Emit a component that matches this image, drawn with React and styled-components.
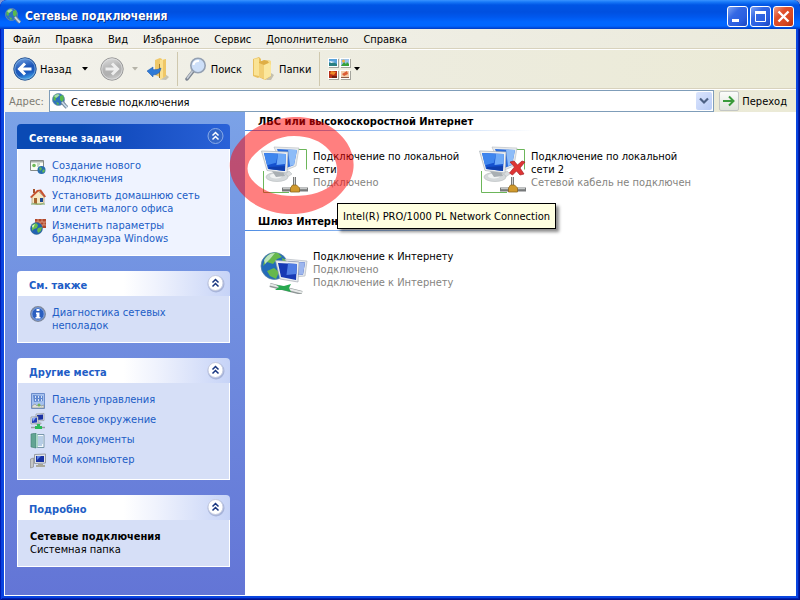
import React from "react";
import styled, { createGlobalStyle } from "styled-components";

const GlobalStyle = createGlobalStyle`
  * { box-sizing: border-box; }
  body { margin: 0; background: #7f97d4; }
  body, button, input {
    font-family: "DejaVu Sans Condensed", "Noto Sans", sans-serif;
    font-size: 11px;
    line-height: 13px;
    color: #000;
  }
  button { border: 0; padding: 0; margin: 0; background: none; }
  h1, h2, h3, p, ul { margin: 0; padding: 0; }
  ul { list-style: none; }
  svg { display: block; flex: none; }
`;

const Desktop = styled.div`
  min-height: 100vh;
  display: flex;
  flex-direction: column;
`;

const DesktopEdge = styled.div`
  height: 1px;
  background: linear-gradient(90deg, #4a70b8 100px, #000 100px, #000 101px, #fff 101px, #fff calc(100% - 62px), #4a70b8 calc(100% - 62px));
`;

const Window = styled.div`
  flex: 1;
  display: flex;
  flex-direction: column;
  background: #0a46e0;
  border-radius: 7px 7px 0 0;
  padding: 0 4px 4px;
  box-shadow: inset 1px 0 #001cb4, inset -1px -1px #00138c, inset 2px 0 #0840e0, inset -2px -2px #0020b0;
`;

const TitleBar = styled.header`
  height: 29px;
  margin: 0 -4px;
  padding: 3px 6px 0 5px;
  display: flex;
  align-items: center;
  gap: 4px;
  border-radius: 7px 7px 0 0;
  background: linear-gradient(#3a94ff 0, #1778f8 2px, #0055e5 5px, #0050e0 12px, #0058ee 17px, #0066ff 22px, #0066ff 26px, #0048d8 28px, #003cc0 29px);
`;

const Title = styled.h1`
  flex: 1;
  font-size: 12px;
  line-height: 16px;
  font-weight: bold;
  color: #fff;
  text-shadow: 1px 1px #0a2a80;
`;

const WindowButtons = styled.div`
  display: flex;
  gap: 2px;
`;

const WindowButton = styled.button`
  width: 21px;
  height: 21px;
  display: grid;
  place-items: center;
  border: 1px solid #fff;
  border-radius: 3px;
  background: ${(p) =>
    p.$close
      ? "linear-gradient(135deg, #f0a088, #e0502c 35%, #d84820 70%, #b83010)"
      : "linear-gradient(135deg, #7fa4f4, #3468e4 35%, #2a5ee0 70%, #1a44c0)"};
`;

const Client = styled.div`
  flex: 1;
  display: flex;
  flex-direction: column;
  background: #fff;
`;

const MenuBar = styled.nav`
  height: 20px;
  display: flex;
  align-items: center;
  gap: 15px;
  padding: 2px 0 0 9px;
  background: linear-gradient(90deg, #f4f3ee, #eeede2 60%, #ebeadb);
  border-bottom: 1px solid #d8d2bd;
`;

const MenuButton = styled.button`
  white-space: nowrap;
`;

const Toolbar = styled.div`
  height: 40px;
  display: flex;
  align-items: center;
  padding-left: 9px;
  background: linear-gradient(90deg, #f3f2ec, #edecdf 50%, #ebead6);
  border-top: 1px solid #fff;
  border-bottom: 1px solid #d8d2bd;
`;

const ToolButton = styled.button`
  display: flex;
  align-items: center;
  gap: 3px;
  margin-right: ${(p) => p.$after || 0}px;
`;

const Divider = styled.span`
  width: 1px;
  height: 34px;
  background: #cfc8ae;
  margin-right: ${(p) => p.$after}px;
`;

const AddressBar = styled.div`
  height: 23px;
  display: flex;
  align-items: stretch;
  border-top: 1px solid #fff;
  background: linear-gradient(90deg, #f3f2ec, #edecdf 50%, #ebead6);
  padding: 0 9px 0 5px;
`;

const AddressLabel = styled.label`
  width: 40px;
  align-self: center;
  color: #7d7b72;
`;

const AddressBox = styled.div`
  flex: 1;
  display: flex;
  align-items: center;
  gap: 1px;
  background: #fff;
  border: 1px solid #7f9db9;
  padding: 0 1px 0 2px;
`;

const AddressInput = styled.input`
  flex: 1;
  min-width: 0;
  border: 0;
  outline: 0;
  padding: 2px 2px 0;
  background: none;
`;

const DropButton = styled.button`
  width: 16px;
  height: 18px;
  display: grid;
  place-items: center;
  border-radius: 2px;
  background: linear-gradient(135deg, #dbe5fd, #b8cbf6);
`;

const GoButton = styled.button`
  display: flex;
  align-items: center;
  gap: 3px;
  margin-left: 5px;
`;

const GoBox = styled.span`
  width: 20px;
  height: 20px;
  display: grid;
  place-items: center;
  border: 1px solid #c3c6c4;
  border-radius: 2px;
  background: linear-gradient(#fbfcfa, #dfe4dc);
`;

const Content = styled.div`
  flex: 1;
  display: flex;
  padding: 0 0 1px 1px;
`;

const Sidebar = styled.aside`
  width: 240px;
  flex: none;
  display: flex;
  flex-direction: column;
  gap: 15px;
  padding: 12px 15px 28px 12px;
  background: linear-gradient(#7ba2e7, #6375d6);
`;

const Panel = styled.section`
  border-radius: 4px 4px 0 0;
  overflow: hidden;
`;

const PanelHeader = styled.header`
  height: 25px;
  display: flex;
  align-items: center;
  justify-content: space-between;
  padding: 0 5px 0 12px;
  color: ${(p) => (p.$primary ? "#fff" : "#215dc6")};
  background: ${(p) =>
    p.$primary
      ? "linear-gradient(90deg, #0a4ab4 30%, #164fc2 55%, #2a62d8)"
      : "linear-gradient(90deg, #fff 50%, #f0f3fd 65%, #c6d3f7)"};
`;

const PanelTitle = styled.h2`
  font-size: 11px;
  line-height: 13px;
  font-weight: bold;
  padding-top: 3px;
`;

const PanelBody = styled.div`
  padding: 10px 12px;
  border: solid #fff;
  border-width: 0 1px 1px;
  background: ${(p) => (p.$primary ? "#eff3ff" : "#d6dff7")};
`;

const TaskList = styled.ul`
  display: flex;
  flex-direction: column;
  gap: 4px;
`;

const TaskLink = styled.a`
  min-height: 16px;
  display: flex;
  gap: 6px;
  color: #215dc6;
  text-decoration: none;
`;

const Detail = styled.p`
  font-weight: ${(p) => (p.$strong ? "bold" : "normal")};
`;

const Main = styled.main`
  flex: 1;
  min-width: 0;
  background: #fff;
`;

const GroupTitle = styled.h2`
  height: 19px;
  padding: 3px 0 0 13px;
  font-size: 11px;
  line-height: 13px;
  font-weight: bold;
  background: linear-gradient(90deg, #4f8de4, #b4d0f6 60%, #fff) left bottom / 290px 1px no-repeat;
`;

const GroupBody = styled.div`
  display: flex;
  flex-wrap: wrap;
  padding: 15px 15px 18px;
`;

const Connection = styled.article`
  position: relative;
  width: 218px;
  display: flex;
  gap: 5px;
`;

const ConnectionText = styled.div`
  padding-top: 4px;
  width: 150px;
`;

const ConnectionName = styled.h3`
  font-size: 11px;
  line-height: 13px;
  font-weight: normal;
`;

const Status = styled.p`
  color: #85847f;
  white-space: nowrap;
`;

const Marker = styled.svg`
  position: absolute;
  left: -32px;
  top: -30px;
  z-index: 1;
  pointer-events: none;
`;

const Tooltip = styled.div`
  position: absolute;
  left: 77px;
  top: 57px;
  z-index: 2;
  padding: 6px 5px 5px;
  white-space: nowrap;
  background: #ffffe1;
  border: 1px solid #000;
  box-shadow: 3px 3px 3px rgba(0, 0, 0, 0.45);
`;

const GlobeIcon = () => (
  <svg width="16" height="16" viewBox="0 0 16 16">
    <circle cx="6.5" cy="6.5" r="6" fill="#2f73bd" stroke="#6f91a8" strokeWidth=".8" />
    <path d="M1.5 4C3 1 6 .5 7 1.5L6 4 4 5 3.500 8 1.500 7zM8 3l3-1 1 4-2 3-2-2zM4 9l3 1-1 2.500z" fill="#59b94c" />
    <path d="M2 3Q5 0 8 2L4 5z" fill="#d9f3ea" opacity=".6" />
    <path d="M10 9l3 3.500 2 2" stroke="#6f8496" strokeWidth="3.500" fill="none" />
    <path d="M10 9l3 3.500 2 2" stroke="#c8d8e8" strokeWidth="1.800" fill="none" />
  </svg>
);

const RoundArrow = ({ forward }) => (
  <svg width="24" height="24" viewBox="0 0 24 24">
    <defs>
      <linearGradient id={forward ? "fwd" : "back"} x1=".3" y1="0" x2=".6" y2="1">
        <stop offset="0" stopColor={forward ? "#dcdcdc" : "#6f9fe0"} />
        <stop offset=".45" stopColor={forward ? "#b4b4b4" : "#1d56b8"} />
        <stop offset=".7" stopColor={forward ? "#b0b0b0" : "#1b5cc0"} />
        <stop offset="1" stopColor={forward ? "#cfcfcf" : "#4cb4f0"} />
      </linearGradient>
    </defs>
    <circle cx="12" cy="12" r="11.2" fill={`url(#${forward ? "fwd" : "back"})`} stroke={forward ? "#999" : "#2c5590"} />
    <circle cx="12" cy="12" r="10.200" fill="none" stroke={forward ? "#dedede" : "#7eb0e2"} strokeWidth=".8" />
    <path
      d={forward ? "M5.500 12h11M12 6.500l5.500 5.500-5.500 5.500" : "M18.500 12H7.500M12 6.500L6.500 12l5.500 5.500"}
      fill="none"
      stroke={forward ? "#eee" : "#fff"}
      strokeWidth="3"
    />
  </svg>
);

const Caret = ({ muted }) => (
  <svg width="6" height="4" viewBox="0 0 6 4">
    <path d="M0 0h6L3 3.500z" fill={muted ? "#b5b3a8" : "#000"} />
  </svg>
);

const UpFolderIcon = () => (
  <svg width="24" height="24" viewBox="0 0 24 24">
    <path d="M18 17l4 3-3 3-6-.500z" fill="#aaa58e" opacity=".6" />
    <path d="M8 3l5-2 2 1v19l-7-3z" fill="#f0c869" />
    <path d="M13 3l6-1v17l-6 4z" fill="#fbe08f" />
    <path d="M12.500 7v14" stroke="#a57b28" strokeWidth="1" />
    <path d="M16 3l3-1v17l-3 2z" fill="#efc766" />
    <path d="M0 14l6-4v2.500q4 1 8-1.500-1 7-8 7V20z" fill="#2f7ad6" stroke="#1a55aa" strokeWidth=".5" />
  </svg>
);

const SearchIcon = () => (
  <svg width="24" height="24" viewBox="0 0 24 24">
    <path d="M3 22l7-9" stroke="#7c8490" strokeWidth="3.500" strokeLinecap="round" />
    <path d="M3 21.500l6-8" stroke="#c9cfd8" strokeWidth="1.500" />
    <circle cx="14" cy="8.500" r="7.200" fill="#cddff8" stroke="#94a0b2" strokeWidth="1.600" />
    <path d="M9.500 8Q10 3.500 15 4" stroke="#fff" strokeWidth="2" fill="none" />
  </svg>
);

const FoldersIcon = () => (
  <svg width="24" height="24" viewBox="0 0 24 24">
    <path d="M19 16l3 2-3 5-5 0z" fill="#a7a28c" opacity=".6" />
    <path d="M1 2l6-2 2 2v17l-3 2-5-2z" fill="#e9c05e" />
    <path d="M2 2l5-1v18l-5-1z" fill="#fae394" />
    <path d="M7 5l5-2 7 1v15l-6 4-6-3z" fill="#dfae45" />
    <path d="M7 6l5 2v14l-5-2z" fill="#f2cf74" />
    <path d="M12 8l7-3v14l-7 4z" fill="#fbe79d" />
    <path d="M15 3l4 1v4l-2-2z" fill="#f7dc87" />
  </svg>
);

const ViewsIcon = () => (
  <svg width="24" height="24" viewBox="0 0 24 24">
    <path d="M2 2h10v9H2zM14 2h10v9H14zM2 14h10v9H2zM14 14h10v9H14z" fill="#a4a49c" />
    <path d="M1 1h10v9H1zM13 1h10v9H13zM1 13h10v9H1zM13 13h10v9H13z" fill="#fff" />
    <path d="M2 2h8v7H2z" fill="#5aa2da" /><path d="M2 6q4-2 8 1v2H2z" fill="#2a7f80" /><path d="M2 4l6 1-4 1z" fill="#fff" />
    <path d="M14 2h8v7h-8z" fill="#9cc3ea" /><path d="M14 9l3-4 2 2 1-2 2 2v2z" fill="#36a13a" /><circle cx="16.500" cy="4" r="1.500" fill="#f0b040" />
    <path d="M2 14h8v7H2z" fill="#b52f18" /><path d="M4 14l5 1-2 3-4-1z" fill="#ed8a27" /><path d="M5 19h5v2H5z" fill="#6f1f12" />
    <path d="M14 14h8v7h-8z" fill="#f1cfae" /><path d="M15 17l5-3 1 3-4 2z" fill="#dc5d36" /><path d="M14 20h8v1h-8z" fill="#8c5b45" />
  </svg>
);

const CollapseIcon = ({ primary }) => (
  <svg width="19" height="19" viewBox="0 0 19 19">
    <circle cx="10" cy="10" r="8.500" fill="#8392bb" opacity={primary ? 0 : 0.5} />
    <circle cx="9.500" cy="9" r="7.500" fill={primary ? "#3467c9" : "#fff"} stroke={primary ? "#88aae8" : "#c5cbe0"} />
    <path d="M6.500 8.500l3-3 3 3M6.500 12.500l3-3 3 3" fill="none" stroke={primary ? "#fff" : "#17357f"} strokeWidth="1.500" />
  </svg>
);

const NewConnectionIcon = () => (
  <svg width="16" height="16" viewBox="0 0 16 16">
    <path d="M.5 1.500h13v10H.5z" fill="#fafdf4" stroke="#858b87" />
    <path d="M1 2h12v1.500H1z" fill="#aab0ab" />
    <circle cx="4" cy="6.500" r="1.800" fill="#70bb58" />
    <path d="M7 5h3M7 7h2" stroke="#9bb19c" />
    <circle cx="11.500" cy="11" r="4" fill="#296daf" />
    <path d="M9 9l2-1 1 2-2 2zM12 12l2-2 1 2-2 2z" fill="#60ba55" />
  </svg>
);

const HouseIcon = () => (
  <svg width="16" height="16" viewBox="0 0 16 16">
    <path d="M3 0h2v4H3z" fill="#a5522b" />
    <path d="M2 8l6-6 6 6v6l-5 2-7-2z" fill="#f6e8c3" stroke="#9b8764" strokeWidth=".6" />
    <path d="M0 8L7 1l4-.5 5 7-1.500 1L9 2 1.500 9z" fill="#c65432" />
    <path d="M4 9h3v6l-3-.7z" fill="#a5652f" />
    <path d="M10 9h3v4h-3z" fill="#1f4a91" />
    <path d="M1 15h14" stroke="#76a45b" />
  </svg>
);

const FirewallIcon = () => (
  <svg width="16" height="16" viewBox="0 0 16 16">
    <path d="M5 0h11v9H5z" fill="#b1492e" />
    <path d="M5 3h11M5 6h11M8 0v3M12 0v3M10 3v3M14 3v3M12 6v3" stroke="#dfa58c" strokeWidth=".8" />
    <circle cx="6.500" cy="9.500" r="6" fill="#2163b3" stroke="#376489" strokeWidth=".5" />
    <path d="M2 6l4-2 2 2-1 3-3 1-2 2zM8 9l4-1-1 4-3 2-1-3z" fill="#67bd4a" />
    <path d="M2 7l3-2-2 4z" fill="#e5f7e5" />
  </svg>
);

const InfoIcon = () => (
  <svg width="16" height="16" viewBox="0 0 16 16">
    <circle cx="8" cy="8" r="7.300" fill="#2a5fc0" stroke="#7f8899" strokeWidth="1.300" />
    <circle cx="8" cy="8" r="6.200" fill="none" stroke="#a9c0ea" strokeWidth=".8" />
    <path d="M6.500 3h3v2h-3zM6 6.500h3.500V11h1v1.500h-5V11h1V8H6z" fill="#fff" />
  </svg>
);

const ControlPanelIcon = () => (
  <svg width="16" height="16" viewBox="0 0 16 16">
    <path d="M1.500.5h13v15h-13z" fill="#a6c1ee" stroke="#6c8dcb" />
    <path d="M3 2l10 1v5l-9 1z" fill="#6088d0" />
    <path d="M5 4h1M8 4h1M11 4h1M5 7h1M8 7h1M11 7h1" stroke="#fff" strokeWidth="1.500" />
    <path d="M2 13l3-2 2 2 2-2 2 2 3-1v3H2z" fill="#dedfd8" stroke="#858a86" strokeWidth=".6" />
    <circle cx="9" cy="12" r="1.500" fill="#74b257" />
  </svg>
);

const NetworkIcon = () => (
  <svg width="16" height="16" viewBox="0 0 16 16">
    <path d="M6 1l8-.5v7L6 8z" fill="#e1e4e9" stroke="#92979d" strokeWidth=".7" />
    <path d="M7 2l6-.5v5L7 7z" fill="#1c32a3" />
    <path d="M1 4l7-.5v7L1 11z" fill="#e8eaed" stroke="#898f96" strokeWidth=".7" />
    <path d="M2 5l5-.5v5L2 10z" fill="#223db6" /><path d="M2 5l4-.500-3 4z" fill="#8da9ef" />
    <path d="M9 9l3 1-2 2H5z" fill="#aab0b3" />
    <path d="M1 14.500h14" stroke="#969d9e" strokeWidth="1.500" />
    <path d="M7 11h3v2h2v3H5v-3h2z" fill="#2aba57" />
  </svg>
);

const DocumentsIcon = () => (
  <svg width="16" height="16" viewBox="0 0 16 16">
    <path d="M5 1.500h9v13H5z" fill="#f3f8fc" stroke="#7998ac" />
    <path d="M8 4h5M8 6h5M8 8h5M8 10h5M8 12h4" stroke="#7ba2cf" />
    <path d="M1 1l5-1v15l-5-1z" fill="#62a493" stroke="#417c72" strokeWidth=".6" />
    <path d="M6 0l2 2v12l-2 1z" fill="#a6d3c4" />
  </svg>
);

const ComputerIcon = () => (
  <svg width="16" height="16" viewBox="0 0 16 16">
    <path d="M.500 6l3-1v9l-3 1z" fill="#c4c6c6" stroke="#8b8e90" strokeWidth=".7" />
    <path d="M4.500 1.500l11-.5v9l-11 .5z" fill="#e2e4e7" stroke="#979ca4" />
    <path d="M6 3h8v6H6z" fill="#1731a4" /><path d="M7 3h4l-4 4z" fill="#6285df" />
    <path d="M8 11h5v1h2v2H6v-2h2z" fill="#aaa99b" />
  </svg>
);

const Screens = () => (
  <>
    <path d="M20 27l9-2 3 3-6 4z" fill="#d9dcde" stroke="#b3b8bb" strokeWidth=".5" />
    <path d="M14 1l25 1-3 18-12 5z" fill="#e8ebed" stroke="#b3b8be" strokeWidth=".6" />
    <path d="M17 3l20 1-3 15-10 4z" fill="#2a6bdc" />
    <path d="M28 3.500l9 .5-3 15-4 1z" fill="#8dbcf8" />
    <ellipse cx="17" cy="31" rx="11" ry="4.500" fill="#d5d9db" stroke="#b3b8bb" strokeWidth=".6" />
    <ellipse cx="16" cy="30" rx="6" ry="2.500" fill="#f1f3f3" />
    <path d="M12 25l11 1 2 4-9 1z" fill="#a9afb3" />
    <path d="M1.500 5L28 6l-1 21-20-2.500z" fill="#eef0f2" stroke="#a9b0b6" strokeWidth=".7" />
    <path d="M4 7l22 1-1 17-17-2z" fill="#1552cf" />
    <path d="M4 7l14 .700-2 9-9 2.500z" fill="#3f86ee" />
    <path d="M18 7.700l8 .300-.500 10-9 1z" fill="#6eaaf8" />
    <path d="M9 21l16-1v5l-16-2z" fill="#0f3fae" />
  </>
);

const LanIcon = ({ disconnected }) => (
  <svg width="48" height="48" viewBox="0 0 48 48">
    <path d="M38 3.500h8.500v20M3.500 25v21.500H29" fill="none" stroke="#6cb65a" />
    <Screens />
    <path d="M22 43.500h26" stroke="#77797a" strokeWidth="4" />
    <path d="M23 42.500h24" stroke="#c6c8c8" strokeWidth="1.500" />
    <path d="M34.500 31v10" stroke="#77797a" strokeWidth="3" />
    <path d="M34.500 31v9" stroke="#d1d2d2" strokeWidth="1" />
    <path d="M32.500 39h4l3 3v4h-9v-4z" fill="#d19a2d" stroke="#8e671e" strokeWidth=".8" />
    {disconnected && (
      <path d="M32 16l4-1 3.500 4L44 15l3 1-5 6 4 6-4 1-3.500-4-4 4-3-2 5-6z" fill="#df3434" stroke="#a51f24" strokeWidth=".7" />
    )}
  </svg>
);

const InternetIcon = () => (
  <svg width="48" height="48" viewBox="0 0 48 48">
    <circle cx="14.500" cy="20" r="13.500" fill="#236bb9" stroke="#5a82a2" strokeWidth=".7" />
    <path d="M5 12q6-7 13-5l4 4-5 2-4 5-6-2-4 4zM7 25l7-3 5 4-3 7-6-3zM22 12l5 2 1 3-5 1z" fill="#66b84c" />
    <path d="M4 14Q8 7 15 7l-5 6-5 5z" fill="#d9f2df" opacity=".75" />
    <path d="M25 13l22 2-2 15-10 1z" fill="#e4e8ed" stroke="#b5bac2" strokeWidth=".7" />
    <path d="M28 15l17 1.500-2 12-8 1z" fill="#1d40ad" /><path d="M38 16l7 .500-2 12-4 .500z" fill="#9db6ee" />
    <path d="M15.500 14.500L39 16l-1 20-18-3z" fill="#eceff2" stroke="#a5abb4" strokeWidth=".7" />
    <path d="M18 17l19 1-1 16-15-3z" fill="#1739b4" /><path d="M28 17.500l9 .500-.500 10-10 1z" fill="#4f7de4" />
    <path d="M10 39l32 8" stroke="#8f9797" strokeWidth="4" />
    <path d="M10 38.500l32 8" stroke="#e6e9e8" strokeWidth="2" />
    <path d="M16 39l8 1 7-2-2 4 2 4-8-2-8 0 4-3z" fill="#28a850" />
  </svg>
);

const GoArrow = () => (
  <svg width="14" height="14" viewBox="0 0 14 14">
    <path d="M1 7h10M7 2.500L11.500 7 7 11.500" fill="none" stroke="#3a9b3b" strokeWidth="2" />
  </svg>
);

const menus = ["Файл", "Правка", "Вид", "Избранное", "Сервис", "Дополнительно", "Справка"];

const networkTasks = [
  { icon: <NewConnectionIcon />, lines: ["Создание нового", "подключения"] },
  { icon: <HouseIcon />, lines: ["Установить домашнюю сеть", "или сеть малого офиса"] },
  { icon: <FirewallIcon />, lines: ["Изменить параметры", "брандмауэра Windows"] },
];

const seeAlso = [{ icon: <InfoIcon />, lines: ["Диагностика сетевых", "неполадок"] }];

const places = [
  { icon: <ControlPanelIcon />, lines: ["Панель управления"] },
  { icon: <NetworkIcon />, lines: ["Сетевое окружение"] },
  { icon: <DocumentsIcon />, lines: ["Мои документы"] },
  { icon: <ComputerIcon />, lines: ["Мой компьютер"] },
];

const Tasks = ({ items }) => (
  <TaskList>
    {items.map(({ icon, lines }) => (
      <li key={lines[0]}>
        <TaskLink href="#">
          {icon}
          <span>
            {lines.map((line, i) => (
              <React.Fragment key={line}>
                {i > 0 && <br />}
                {line}
              </React.Fragment>
            ))}
          </span>
        </TaskLink>
      </li>
    ))}
  </TaskList>
);

const SidePanel = ({ title, primary, children }) => (
  <Panel>
    <PanelHeader $primary={primary}>
      <PanelTitle>{title}</PanelTitle>
      <button type="button" aria-label={title}>
        <CollapseIcon primary={primary} />
      </button>
    </PanelHeader>
    <PanelBody $primary={primary}>{children}</PanelBody>
  </Panel>
);

export default function App() {
  return (
    <Desktop>
      <GlobalStyle />
      <Window>
        <TitleBar>
          <GlobeIcon />
          <Title>Сетевые подключения</Title>
          <WindowButtons>
            <WindowButton aria-label="Свернуть">
              <svg width="19" height="19" viewBox="0 0 19 19"><path d="M4 12h7v3H4z" fill="#fff" /></svg>
            </WindowButton>
            <WindowButton aria-label="Развернуть">
              <svg width="19" height="19" viewBox="0 0 19 19"><path d="M4.500 5v9.500h10V5M4 5.500h11" fill="none" stroke="#fff" /><path d="M4 4h11v3H4z" fill="#fff" /></svg>
            </WindowButton>
            <WindowButton $close aria-label="Закрыть">
              <svg width="19" height="19" viewBox="0 0 19 19"><path d="M4.500 4.500l10 10M14.500 4.500l-10 10" stroke="#fff" strokeWidth="2.400" /></svg>
            </WindowButton>
          </WindowButtons>
        </TitleBar>
        <Client>
          <MenuBar>
            {menus.map((m) => <MenuButton key={m}>{m}</MenuButton>)}
          </MenuBar>
          <Toolbar>
            <ToolButton $after={10}><RoundArrow />Назад</ToolButton>
            <ToolButton $after={12} aria-label="Журнал назад"><Caret /></ToolButton>
            <ToolButton $after={8} aria-label="Вперед"><RoundArrow forward /></ToolButton>
            <ToolButton $after={9} aria-label="Журнал вперед"><Caret muted /></ToolButton>
            <ToolButton $after={6} aria-label="Вверх"><UpFolderIcon /></ToolButton>
            <Divider $after={6} />
            <ToolButton $after={10}><SearchIcon />Поиск</ToolButton>
            <ToolButton $after={8}><FoldersIcon />Папки</ToolButton>
            <Divider $after={7} />
            <ToolButton aria-label="Вид"><ViewsIcon /><Caret /></ToolButton>
          </Toolbar>
          <AddressBar>
            <AddressLabel htmlFor="address">Адрес:</AddressLabel>
            <AddressBox>
              <GlobeIcon />
              <AddressInput id="address" defaultValue="Сетевые подключения" />
              <DropButton aria-label="Список адресов">
                <svg width="10" height="8" viewBox="0 0 10 8"><path d="M1 1.500l4 4 4-4" fill="none" stroke="#4d6185" strokeWidth="2.200" /></svg>
              </DropButton>
            </AddressBox>
            <GoButton><GoBox><GoArrow /></GoBox>Переход</GoButton>
          </AddressBar>
          <Content>
            <Sidebar>
              <SidePanel title="Сетевые задачи" primary><Tasks items={networkTasks} /></SidePanel>
              <SidePanel title="См. также"><Tasks items={seeAlso} /></SidePanel>
              <SidePanel title="Другие места"><Tasks items={places} /></SidePanel>
              <SidePanel title="Подробно">
                <Detail $strong>Сетевые подключения</Detail>
                <Detail>Системная папка</Detail>
              </SidePanel>
            </Sidebar>
            <Main>
              <section>
                <GroupTitle>ЛВС или высокоскоростной Интернет</GroupTitle>
                <GroupBody>
                  <Connection>
                    <LanIcon />
                    <ConnectionText>
                      <ConnectionName>Подключение по локальной сети</ConnectionName>
                      <Status>Подключено</Status>
                    </ConnectionText>
                    <Marker width="128" height="100" viewBox="0 0 128 100">
                      <path
                        fill="#f00"
                        fillOpacity=".5"
                        fillRule="evenodd"
                        d="M65 1C88 0 108 10 119 27C128 41 128 58 118 71C106 88 86 98 64 98C40 98 19 88 8 70C-1 57 0 40 9 29C21 12 43 2 65 1ZM66 20C49 20 38 28 27 38C17 47 17 58 27 67C37 76 49 80 65 80C83 80 98 76 106 66C112 57 109 43 101 34C93 25 81 20 66 20Z"
                      />
                    </Marker>
                    <Tooltip role="tooltip">Intel(R) PRO/1000 PL Network Connection</Tooltip>
                  </Connection>
                  <Connection>
                    <LanIcon disconnected />
                    <ConnectionText>
                      <ConnectionName>Подключение по локальной сети 2</ConnectionName>
                      <Status>Сетевой кабель не подключен</Status>
                    </ConnectionText>
                  </Connection>
                </GroupBody>
              </section>
              <section>
                <GroupTitle>Шлюз Интернета</GroupTitle>
                <GroupBody>
                  <Connection>
                    <InternetIcon />
                    <ConnectionText>
                      <ConnectionName>Подключение к Интернету</ConnectionName>
                      <Status>Подключено</Status>
                      <Status>Подключение к Интернету</Status>
                    </ConnectionText>
                  </Connection>
                </GroupBody>
              </section>
            </Main>
          </Content>
        </Client>
      </Window>
      <DesktopEdge />
    </Desktop>
  );
}
